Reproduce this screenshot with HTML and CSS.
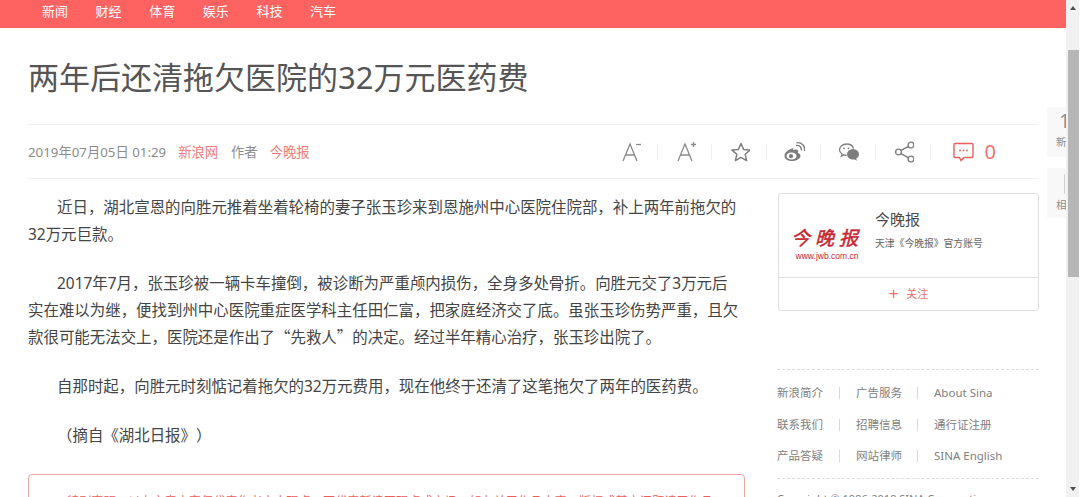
FILE: index.html
```html
<!DOCTYPE html>
<html lang="zh-CN">
<head>
    <meta charset="UTF-8">
    <title>两年后还清拖欠医院的32万元医药费</title>
    <link rel="stylesheet" href="styles.css">
</head>
<body>
<div class="page">
    <div class="content">
        <div class="nav">
            <a>新闻</a><a>财经</a><a>体育</a><a>娱乐</a><a>科技</a><a>汽车</a>
        </div>
        <div class="wrap">
            <h1 class="title">两年后还清拖欠医院的32万元医药费</h1>
            <div class="meta">
                <div class="info">
                    <span class="date">2019年07月05日 01:29</span>
                    <a class="source">新浪网</a>
                    <span class="author">作者</span>
                    <a class="source">今晚报</a>
                </div>
                <div class="tools">
                    <span class="tool">
                        <svg width="24" height="22" viewBox="-2 0 24 22"><path d="M3 20 10 3l7 17M5.500 14h9" fill="none" stroke="#8a8a8a" stroke-width="1.300"/><path d="M16 3.500h5" stroke="#8a8a8a" stroke-width="1.300"/></svg>
                    </span>
                    <span class="tool">
                        <svg width="24" height="22" viewBox="-3 0 24 22"><path d="M3 20 10 3l7 17M5.500 14h9" fill="none" stroke="#8a8a8a" stroke-width="1.300"/><path d="M16 3.500h5M18.500 1v5" stroke="#8a8a8a" stroke-width="1.300"/></svg>
                    </span>
                    <span class="tool">
                        <svg width="22" height="22" viewBox="-2 0 22 22"><path d="M11 2.500l2.600 5.900 6.400.7-4.800 4.200 1.400 6.300L11 16.400l-5.600 3.200 1.400-6.300L2 9.100l6.400-.7z" fill="none" stroke="#7d7d7d" stroke-width="1.500" stroke-linejoin="round"/></svg>
                    </span>
                    <span class="tool">
                        <svg width="22" height="22" viewBox="0 0 22 22"><path d="M9 7.500c-4 1-7.500 4.300-7.500 7.500 0 3 3.500 5 7.500 5 5 0 8.500-2.700 8.500-5.300 0-2-1.800-2.500-2.600-2.800.6-1.500.3-3.300-2-3.300-1 0-2 .5-2.600.7.300-1.600-.3-2.500-1.300-1.800z" fill="#7d7d7d"/><ellipse cx="8.500" cy="15" rx="5" ry="3.600" fill="#fff"/><circle cx="8" cy="15.200" r="2.100" fill="#7d7d7d"/><path d="M13 4.500c3-.8 6 1.700 5.300 5M13.500 1.800c5-1 9.300 3.300 7.800 8.200" fill="none" stroke="#7d7d7d" stroke-width="1.400"/></svg>
                    </span>
                    <span class="tool">
                        <svg width="22" height="20" viewBox="-1 0 22 20"><path d="M8.500 2C4.600 2 1.500 4.500 1.500 7.700c0 1.900 1 3.300 2.500 4.400l-.6 2 2.200-1.200c1 .3 1.900.5 3 .5" fill="none" stroke="#7d7d7d" stroke-width="1.300"/><path d="M8.500 2c3.400 0 6.300 1.900 6.900 4.600" fill="none" stroke="#7d7d7d" stroke-width="1.300"/><circle cx="6" cy="6.300" r=".9" fill="#7d7d7d"/><circle cx="10.500" cy="6.300" r=".9" fill="#7d7d7d"/><ellipse cx="15" cy="12.300" rx="6" ry="5.200" fill="#7d7d7d"/><path d="M18 16.500l1.200 2.300-3-1.500z" fill="#7d7d7d"/></svg>
                    </span>
                    <span class="tool">
                        <svg width="22" height="22" viewBox="-2 0 22 22"><path d="M15.500 4.800 6.500 9.700M6.500 12.300l9 5" stroke="#7d7d7d" stroke-width="1.400"/><circle cx="17" cy="4" r="2.900" fill="#fff" stroke="#7d7d7d" stroke-width="1.400"/><circle cx="4.500" cy="11" r="2.900" fill="#fff" stroke="#7d7d7d" stroke-width="1.400"/><circle cx="17" cy="18" r="2.900" fill="#fff" stroke="#7d7d7d" stroke-width="1.400"/></svg>
                    </span>
                    <span class="tool tool-comment">
                        <svg width="21" height="20" viewBox="0 0 21 20"><path d="M2 1.500h17a1 1 0 0 1 1 1v12a1 1 0 0 1-1 1h-8l-3 3-1.500-3H2a1 1 0 0 1-1-1v-12a1 1 0 0 1 1-1z" fill="none" stroke="#e8605c" stroke-width="1.400"/><circle cx="7" cy="8.500" r=".9" fill="#e8605c"/><circle cx="10.500" cy="8.500" r=".9" fill="#e8605c"/><circle cx="14" cy="8.500" r=".9" fill="#e8605c"/></svg>
                        <span class="count">0</span>
                    </span>
                </div>
            </div>
            <div class="columns">
                <div class="article">
                    <p>近日，湖北宣恩的向胜元推着坐着轮椅的妻子张玉珍来到恩施州中心医院住院部，补上两年前拖欠的32万元巨款。</p>
                    <p>2017年7月，张玉珍被一辆卡车撞倒，被诊断为严重颅内损伤，全身多处骨折。向胜元交了3万元后实在难以为继，便找到州中心医院重症医学科主任田仁富，把家庭经济交了底。虽张玉珍伤势严重，且欠款很可能无法交上，医院还是作出了<span class="quote">“</span>先救人<span class="quote">”</span>的决定。经过半年精心治疗，张玉珍出院了。</p>
                    <p>自那时起，向胜元时刻惦记着拖欠的32万元费用，现在他终于还清了这笔拖欠了两年的医药费。</p>
                    <p class="cite">（摘自《湖北日报》）</p>
                    <div class="notice">特别声明：以上文章内容仅代表作者本人观点，不代表新浪网观点或立场。如有关于作品内容、版权或其它问题请于作品发表后的30日内与新浪网联系。</div>
                </div>
                <div class="side">
                    <div class="card">
                        <div class="card-top">
                            <div class="logo">
                                <div class="logo-name">今晚报</div>
                                <div class="logo-url">www.jwb.com.cn</div>
                            </div>
                            <div class="card-info">
                                <div class="card-name">今晚报</div>
                                <div class="card-desc">天津《今晚报》官方账号</div>
                            </div>
                        </div>
                        <div class="follow"><span class="plus">+</span>关注</div>
                    </div>
                    <div class="links">
                        <a>新浪简介</a><i></i><a>广告服务</a><i></i><a>About Sina</a>
                        <a>联系我们</a><i></i><a>招聘信息</a><i></i><a>通行证注册</a>
                        <a>产品答疑</a><i></i><a>网站律师</a><i></i><a>SINA English</a>
                    </div>
                    <div class="copy">Copyright © 1996-2019 SINA Corporation</div>
                </div>
            </div>
        </div>
        <div class="float-box float-one"><b>1</b><span>新浪</span></div>
        <div class="float-box float-two"><b class="bar"></b><span>相关</span></div>
    </div>
    <div class="scrollbar">
        <div class="arrow arrow-up"></div>
        <div class="thumb"></div>
        <div class="arrow arrow-down"></div>
    </div>
</div>
</body>
</html>
```

FILE: styles.css
```css
html, body {
    margin: 0;
    height: 497px;
    overflow: hidden;
    background: #fff;
}
body {
    font-family: "Noto Sans", "Noto Sans CJK SC", sans-serif;
    color: #4a4a4a;
}
.page {
    display: flex;
    height: 497px;
}
.content {
    position: relative;
    flex: 1;
    min-width: 0;
    overflow: hidden;
}
.nav {
    display: flex;
    gap: 27.600px;
    height: 28px;
    padding-left: 42px;
    background: #ff6361;
    color: #fff;
    font-size: 13px;
    line-height: 22px;
}
.wrap {
    width: 1010px;
    margin-left: 28px;
}
.title {
    height: 97px;
    margin: 0;
    border-bottom: 1px solid #f0f0f0;
    box-sizing: border-box;
    font-size: 31px;
    font-weight: 400;
    line-height: 99px;
    color: #555;
    white-space: nowrap;
}
.meta {
    display: flex;
    justify-content: space-between;
    align-items: center;
    height: 53px;
    border-bottom: 1px solid #f0f0f0;
}
.info {
    display: flex;
    font-size: 13.300px;
    color: #8c8c8c;
}
.source {
    margin-left: 12px;
    color: #ee7b78;
}
.author {
    margin-left: 13px;
}
.tools {
    display: flex;
    align-items: center;
    padding-right: 42px;
}
.tool {
    display: flex;
    justify-content: center;
    align-items: center;
    width: 54.600px;
    height: 16px;
    border-right: 1px solid #efefef;
    box-sizing: border-box;
}
.tool svg {
    flex: none;
}
.tool-comment {
    gap: 11px;
    width: auto;
    padding-left: 22px;
    border-right: none;
}
.count {
    font-size: 20px;
    line-height: 16px;
    color: #ee7370;
}
.columns {
    display: flex;
    justify-content: space-between;
}
.article {
    width: 717px;
    padding-top: 15px;
    font-size: 15.450px;
    line-height: 27px;
    color: #444;
    text-spacing-trim: space-all;
}
.article p {
    width: 711px;
    margin: 0 0 22px;
    text-indent: 29px;
}
.article .cite {
    margin-bottom: 25px;
}
.quote {
    font-family: "Noto Sans CJK SC", sans-serif;
    line-height: 1;
}
.notice {
    height: 60px;
    padding: 15px 19px 0 38px;
    border: 1px solid #f0a3a3;
    border-radius: 4px;
    box-sizing: border-box;
    font-size: 12.200px;
    line-height: 24px;
    color: #e8605c;
    overflow: hidden;
}
.side {
    width: 261px;
    margin-right: -1px;
    padding-top: 14px;
}
.card {
    height: 118px;
    border: 1px solid #dedede;
    border-radius: 3px;
    box-sizing: border-box;
}
.card-top {
    display: flex;
    height: 83px;
    border-bottom: 1px solid #dedede;
}
.logo {
    width: 96px;
    padding-top: 30px;
    text-align: center;
    color: #c8242f;
}
.logo-name {
    font-family: "Noto Sans CJK SC", sans-serif;
    font-size: 19px;
    font-style: italic;
    letter-spacing: 5px;
    line-height: 26px;
    -webkit-text-stroke: 0.500px #c8242f;
}
.logo-url {
    font-family: "Liberation Sans", sans-serif;
    font-size: 8.500px;
    line-height: 12px;
}
.card-info {
    padding-top: 12px;
}
.card-name {
    font-size: 15px;
    line-height: 26px;
    color: #4a4a4a;
}
.card-desc {
    font-size: 9.800px;
    line-height: 24px;
    color: #666;
}
.follow {
    display: flex;
    justify-content: center;
    align-items: center;
    gap: 8px;
    height: 33px;
    padding-bottom: 3px;
    box-sizing: border-box;
    font-size: 11px;
    color: #e8706c;
}
.plus {
    font-size: 17px;
}
.links {
    display: grid;
    grid-template-columns: 46px 1px 45px 1px auto;
    column-gap: 16px;
    row-gap: 13.500px;
    align-items: center;
    margin-top: 58px;
    margin-left: -1px;
    padding: 14px 0 13px;
    border-top: 1px dashed #ddd;
    border-bottom: 1px dashed #ddd;
    font-size: 11.500px;
    line-height: 18px;
    color: #808080;
    white-space: nowrap;
}
.links i {
    height: 12px;
    background: #d9d9d9;
}
.copy {
    margin-top: 12px;
    margin-left: -1px;
    font-size: 11px;
    line-height: 16px;
    color: #808080;
    white-space: nowrap;
}
.float-box {
    position: absolute;
    left: 1047px;
    width: 60px;
    height: 50px;
    background: #f8f8f8;
    color: #8c8c8c;
}
.float-one {
    top: 107px;
}
.float-two {
    top: 168px;
}
.float-box b {
    display: block;
    height: 26px;
    margin-left: 12px;
    font-size: 20px;
    font-weight: 400;
    line-height: 28px;
}
.float-box .bar {
    width: 1px;
    height: 20px;
    margin: 6px 0 0 17px;
    background: #cfcfcf;
}
.float-box span {
    display: block;
    padding-left: 9px;
    font-size: 10.500px;
    line-height: 18px;
}
.float-two span {
    margin-top: 2px;
}
.scrollbar {
    display: flex;
    flex-direction: column;
    flex: none;
    width: 13px;
    margin-right: 1px;
    background: #f1f1f1;
}
.arrow {
    display: flex;
    justify-content: center;
    align-items: center;
    height: 16px;
}
.arrow::before {
    content: "";
    border-left: 3.500px solid transparent;
    border-right: 3.500px solid transparent;
}
.arrow-up::before {
    border-bottom: 4px solid #505050;
}
.arrow-down {
    margin-top: auto;
}
.arrow-down::before {
    border-top: 4px solid #505050;
}
.thumb {
    height: 227px;
    margin: 34px 0 0 2px;
    background: #b6b6b6;
}
```
